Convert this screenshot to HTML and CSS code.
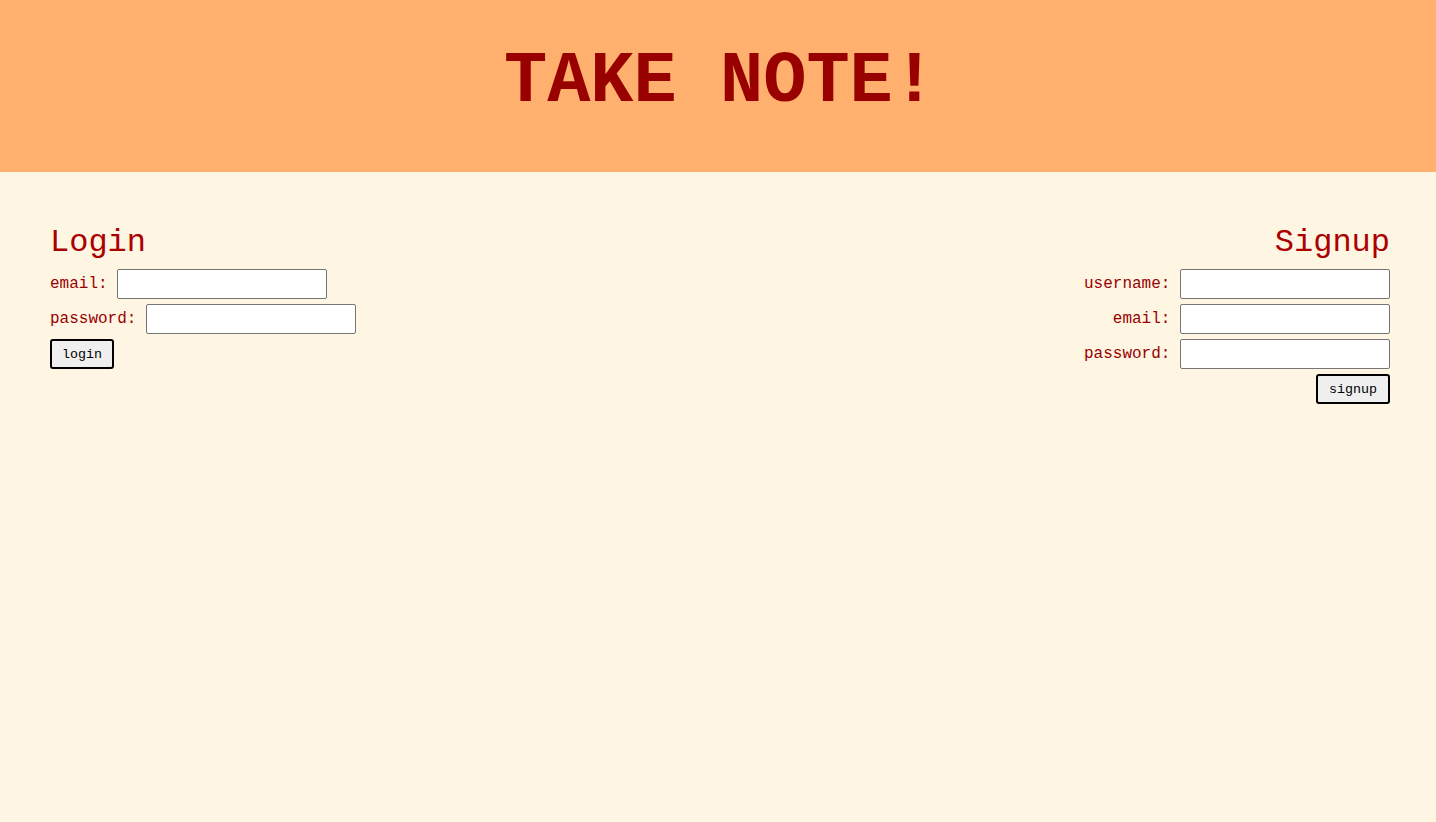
FILE: index.html
```html
<!DOCTYPE html>
<html>
<head>
<meta charset="utf-8">
<title>Take Note!</title>
<link rel="stylesheet" href="styles.css">
</head>
<body>
<header class="top">
  <h1 class="title">TAKE NOTE!</h1>
</header>
<main class="forms">
  <section class="panel">
    <h2 class="panel-title">Login</h2>
    <form class="form">
      <div class="row"><label>email:</label> <input type="text" class="field"></div>
      <div class="row"><label>password:</label> <input type="password" class="field"></div>
      <div class="row"><button type="button" class="btn">login</button></div>
    </form>
  </section>
  <section class="panel panel-right">
    <h2 class="panel-title">Signup</h2>
    <form class="form">
      <div class="row"><label>username:</label> <input type="text" class="field"></div>
      <div class="row"><label>email:</label> <input type="text" class="field"></div>
      <div class="row"><label>password:</label> <input type="password" class="field"></div>
      <div class="row"><button type="button" class="btn btn-wide">signup</button></div>
    </form>
  </section>
</main>
</body>
</html>
```
FILE: styles.css
```css
html, body {
  margin: 0;
  padding: 0;
}
body {
  background: #fff5e3;
  font-family: "Liberation Mono", "Courier New", monospace;
  color: #990000;
}
.top {
  background: #ffaf6e;
  height: 172px;
  display: flex;
  justify-content: center;
  align-items: flex-start;
}
.title {
  margin: 41px 0 0;
  font-size: 72px;
  font-weight: bold;
  color: #990000;
  line-height: 1.15;
  transform: translateX(2px);
}
.forms {
  display: flex;
  justify-content: space-between;
  padding: 0 46px 0 50px;
}
.panel-right {
  text-align: right;
}
.panel-title {
  font-size: 32px;
  font-weight: normal;
  margin: 53px 0 8px;
  line-height: 36px;
  color: #aa0000;
}
.row {
  margin-bottom: 5px;
  font-size: 16px;
  line-height: 30px;
  height: 30px;
}
.row label {
  color: #990000;
}
.field {
  width: 210px;
  height: 30px;
  box-sizing: border-box;
  border: 1px solid #767676;
  border-radius: 2px;
  background: #fff;
  vertical-align: top;
  margin: 0;
  padding: 1px 2px;
}
.btn {
  font-family: "Liberation Mono", "Courier New", monospace;
  font-size: 13.33px;
  color: #000;
  background: #efefef;
  border: 2px solid #000;
  border-radius: 3px;
  height: 30px;
  padding: 0 10px;
  vertical-align: top;
  margin: 0;
}
.btn-wide {
  padding: 0 11px;
}
```
